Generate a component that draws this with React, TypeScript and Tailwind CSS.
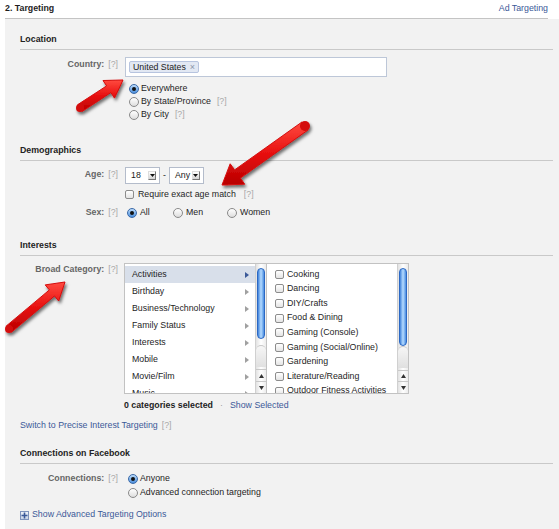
import React from "react";

const Help = () => <span className="text-[#a8a8a8] font-normal ml-[4px]">[?]</span>;

function Radio({ on }: { on?: boolean }) {
  return on ? (
    <span className="flex items-center justify-center w-[10px] h-[10px] rounded-full border border-[#3a69a8] bg-gradient-to-b from-[#bcdcfb] to-[#4b8fdc] shrink-0">
      <span className="w-[4px] h-[4px] rounded-full bg-[#111]" />
    </span>
  ) : (
    <span className="w-[10px] h-[10px] rounded-full border border-[#8a8a8a] bg-gradient-to-b from-white to-[#dedede] shrink-0" />
  );
}

const Check = () => (
  <span className="w-[9px] h-[9px] rounded-[2px] border border-[#8c8c8c] bg-gradient-to-b from-white to-[#e4e4e4] shrink-0" />
);

function Select({ value }: { value: string }) {
  return (
    <div className="flex items-center justify-between w-[35px] h-[17px] border border-[#b4bccb] bg-white pl-[5px] pr-[3px] text-[#1a1a1a]">
      <span>{value}</span>
      <span className="flex items-center justify-center w-[8px] h-[9px] border-r border-b border-[#777] border-t border-l border-t-[#ddd] border-l-[#ddd] bg-gradient-to-b from-white to-[#d4d4d4]">
        <svg width="5" height="3" viewBox="0 0 5 3">
          <polygon points="0,0 5,0 2.5,3" fill="#111" />
        </svg>
      </span>
    </div>
  );
}

function Scrollbar({ thumb }: { thumb: number }) {
  return (
    <div className="flex flex-col w-[11px] border-l border-[#d0d0d0] bg-gradient-to-r from-[#e2e2e2] via-white to-[#ececec]">
      <div className="flex-1 pt-[4px] px-[1px]">
        <div
          className="rounded-full border border-[#2b68c4] bg-gradient-to-r from-[#3f82da] via-[#b6dcff] to-[#4a8de0]"
          style={{ height: thumb }}
        />
      </div>
      <div className="h-[22px] rounded-t-full bg-gradient-to-b from-[#f6f6f6] to-[#e0e0e0] border-t border-[#c8c8c8] mb-[2px]" />
      <div className="flex items-center justify-center h-[12px] border-t border-[#c8c8c8]">
        <svg width="5" height="4" viewBox="0 0 5 4">
          <polygon points="2.5,0 5,4 0,4" fill="#333" />
        </svg>
      </div>
      <div className="flex items-center justify-center h-[12px] border-t border-[#c8c8c8]">
        <svg width="5" height="4" viewBox="0 0 5 4">
          <polygon points="0,0 5,0 2.5,4" fill="#333" />
        </svg>
      </div>
    </div>
  );
}

const Chevron = ({ dark }: { dark?: boolean }) => (
  <svg width="4" height="6" viewBox="0 0 4 6">
    <polygon points="0,0 4,3 0,6" fill={dark ? "#3b5998" : "#a0a0a0"} />
  </svg>
);

function Title({ children, className }: { children: React.ReactNode; className: string }) {
  return (
    <div className={"font-bold text-[#222] leading-[12px] pb-[4px] border-b border-[#c9c9c9] " + className}>
      {children}
    </div>
  );
}

const categories = [
  "Activities",
  "Birthday",
  "Business/Technology",
  "Family Status",
  "Interests",
  "Mobile",
  "Movie/Film",
  "Music",
];

const subs = [
  "Cooking",
  "Dancing",
  "DIY/Crafts",
  "Food & Dining",
  "Gaming (Console)",
  "Gaming (Social/Online)",
  "Gardening",
  "Literature/Reading",
  "Outdoor Fitness Activities",
];

function arrow(tx: number, ty: number, hx: number, hy: number, s: number, hw: number, hl: number) {
  const dx = hx - tx;
  const dy = hy - ty;
  const L = Math.hypot(dx, dy);
  const ux = dx / L;
  const uy = dy / L;
  const nx = -uy;
  const ny = ux;
  const bx = hx - ux * hl;
  const by = hy - uy * hl;
  const p = (x: number, y: number) => `${x.toFixed(1)},${y.toFixed(1)}`;
  return [
    p(tx + (nx * s) / 2, ty + (ny * s) / 2),
    p(bx + (nx * s) / 2, by + (ny * s) / 2),
    p(bx + (nx * hw) / 2, by + (ny * hw) / 2),
    p(hx, hy),
    p(bx - (nx * hw) / 2, by - (ny * hw) / 2),
    p(bx - (nx * s) / 2, by - (ny * s) / 2),
    p(tx - (nx * s) / 2, ty - (ny * s) / 2),
  ].join(" ");
}

const arrows = [
  { t: [80, 108], h: [123, 80], s: 8, hw: 21, hl: 17 },
  { t: [305, 126], h: [222, 185], s: 10, hw: 25, hl: 19 },
  { t: [9, 329], h: [65, 282], s: 8, hw: 21, hl: 17 },
];

export default function App() {
  return (
    <div className="relative w-[559px] h-[529px] overflow-hidden bg-white flex flex-col font-['Liberation_Sans',Arial,sans-serif] text-[8.8px] text-[#1e1e1e]">
      <div className="flex items-center justify-between h-[19px] ml-[5px] w-[543px] border-b border-[#c4c4c4] shrink-0">
        <span className="font-bold">2. Targeting</span>
        <span className="text-[#3b5998]">Ad Targeting</span>
      </div>

      <div className="flex-1 ml-[5px] bg-[#f2f2f2] pl-[15px] pr-[6px] pt-[14px]">
        <Title className="">Location</Title>
        <div className="flex mt-[7px]">
          <div className="w-[98px] mr-[7px] text-right font-bold text-[#666] pt-[1px] leading-[12px]">
            Country:<Help />
          </div>
          <div>
            <div className="w-[262px] h-[20px] border border-[#bdc7d8] bg-white pl-[3px] pt-[3px]">
              <span className="inline-flex items-center gap-[4px] h-[12px] px-[3px] border border-[#b7c4df] bg-[#e2e8f3] rounded-[2px] text-[#1a1a1a] leading-[10px]">
                United States <span className="text-[#8a94a8] text-[9px]">×</span>
              </span>
            </div>
            <div className="mt-[5px] ml-[4px]">
              <div className="flex items-center gap-[2px] h-[13px]"><Radio on />Everywhere</div>
              <div className="flex items-center gap-[2px] h-[13px]"><Radio />By State/Province<Help /></div>
              <div className="flex items-center gap-[2px] h-[13px]"><Radio />By City<Help /></div>
            </div>
          </div>
        </div>

        <Title className="mt-[23px]">Demographics</Title>
        <div className="flex mt-[6px]">
          <div className="w-[98px] mr-[7px] text-right font-bold text-[#666] pt-[1px] leading-[12px]">
            Age:<Help />
          </div>
          <div>
            <div className="flex items-center gap-[3px]">
              <Select value="18" />
              <span>-</span>
              <Select value="Any" />
            </div>
            <div className="flex items-center gap-[4px] h-[13px] mt-[4px]">
              <Check />Require exact age match<Help />
            </div>
          </div>
        </div>
        <div className="flex mt-[5px] h-[13px] items-center">
          <div className="w-[98px] mr-[7px] text-right font-bold text-[#666]">
            Sex:<Help />
          </div>
          <div className="flex items-center pl-[2px]">
            <div className="flex items-center gap-[3px] w-[46px]"><Radio on />All</div>
            <div className="flex items-center gap-[3px] w-[54px]"><Radio />Men</div>
            <div className="flex items-center gap-[3px]"><Radio />Women</div>
          </div>
        </div>

        <Title className="mt-[20px]">Interests</Title>
        <div className="flex mt-[7px]">
          <div className="w-[98px] mr-[6px] text-right font-bold text-[#666] leading-[12px]">
            Broad Category:<Help />
          </div>
          <div>
            <div className="flex w-[285px] h-[131px] border border-[#c2c2c2] bg-white">
              <div className="flex w-[141px]">
                <div className="flex-1 overflow-hidden pt-[2px]">
                  {categories.map((c, i) => (
                    <div
                      key={c}
                      className={
                        "flex items-center justify-between h-[17px] pl-[7px] pr-[6px] " +
                        (i === 0 ? "bg-[#d8dfea]" : "")
                      }
                    >
                      <span>{c}</span>
                      <Chevron dark={i === 0} />
                    </div>
                  ))}
                </div>
                <Scrollbar thumb={71} />
              </div>
              <div className="flex flex-1 border-l border-[#c2c2c2]">
                <div className="flex-1 overflow-hidden pt-[3px] pl-[8px]">
                  {subs.map((s) => (
                    <div key={s} className="flex items-center gap-[3px] h-[14.6px] whitespace-nowrap">
                      <Check />
                      {s}
                    </div>
                  ))}
                </div>
                <Scrollbar thumb={78} />
              </div>
            </div>
            <div className="flex items-center h-[12px] mt-[6px]">
              <span className="font-bold">0 categories selected</span>
              <span className="mx-[7px] text-[#999]">·</span>
              <span className="text-[#3b5998]">Show Selected</span>
            </div>
          </div>
        </div>
        <div className="mt-[7px] leading-[12px] text-[#3b5998]">
          Switch to Precise Interest Targeting<Help />
        </div>

        <Title className="mt-[16px]">Connections on Facebook</Title>
        <div className="flex mt-[8px]">
          <div className="w-[98px] mr-[7px] text-right font-bold text-[#666] h-[14px] flex items-center justify-end">
            Connections:<Help />
          </div>
          <div className="ml-[3px]">
            <div className="flex items-center gap-[2px] h-[14px]"><Radio on />Anyone</div>
            <div className="flex items-center gap-[2px] h-[14px]"><Radio />Advanced connection targeting</div>
          </div>
        </div>
        <div className="flex items-center gap-[3px] mt-[9px] h-[12px] text-[#3b5998]">
          <span className="flex items-center justify-center w-[9px] h-[9px] border border-[#7f93bc] bg-gradient-to-b from-[#eef2f9] to-[#c9d3e6]">
            <svg width="7" height="7" viewBox="0 0 7 7">
              <path d="M3.5 0.5v6M0.5 3.5h6" stroke="#3b5998" strokeWidth="1.6" />
            </svg>
          </span>
          Show Advanced Targeting Options
        </div>
      </div>

      <svg className="absolute inset-0 pointer-events-none" width="559" height="529">
        <defs>
          <linearGradient id="red" x1="0" y1="0" x2="0" y2="1">
            <stop offset="0" stopColor="#ff4b40" />
            <stop offset="0.5" stopColor="#e81010" />
            <stop offset="1" stopColor="#b80000" />
          </linearGradient>
          <filter id="sh" x="-30%" y="-30%" width="160%" height="160%">
            <feDropShadow dx="1.5" dy="2.5" stdDeviation="1.5" floodColor="#000" floodOpacity="0.55" />
          </filter>
        </defs>
        {arrows.map((a, i) => (
          <g key={i} filter="url(#sh)">
            <polygon
              points={arrow(a.t[0], a.t[1], a.h[0], a.h[1], a.s, a.hw, a.hl)}
              fill="url(#red)"
              stroke="#d40a0a"
              strokeWidth="1"
              strokeLinejoin="round"
            />
            <circle cx={a.t[0]} cy={a.t[1]} r={a.s / 2} fill="#d40a0a" />
          </g>
        ))}
      </svg>
    </div>
  );
}
